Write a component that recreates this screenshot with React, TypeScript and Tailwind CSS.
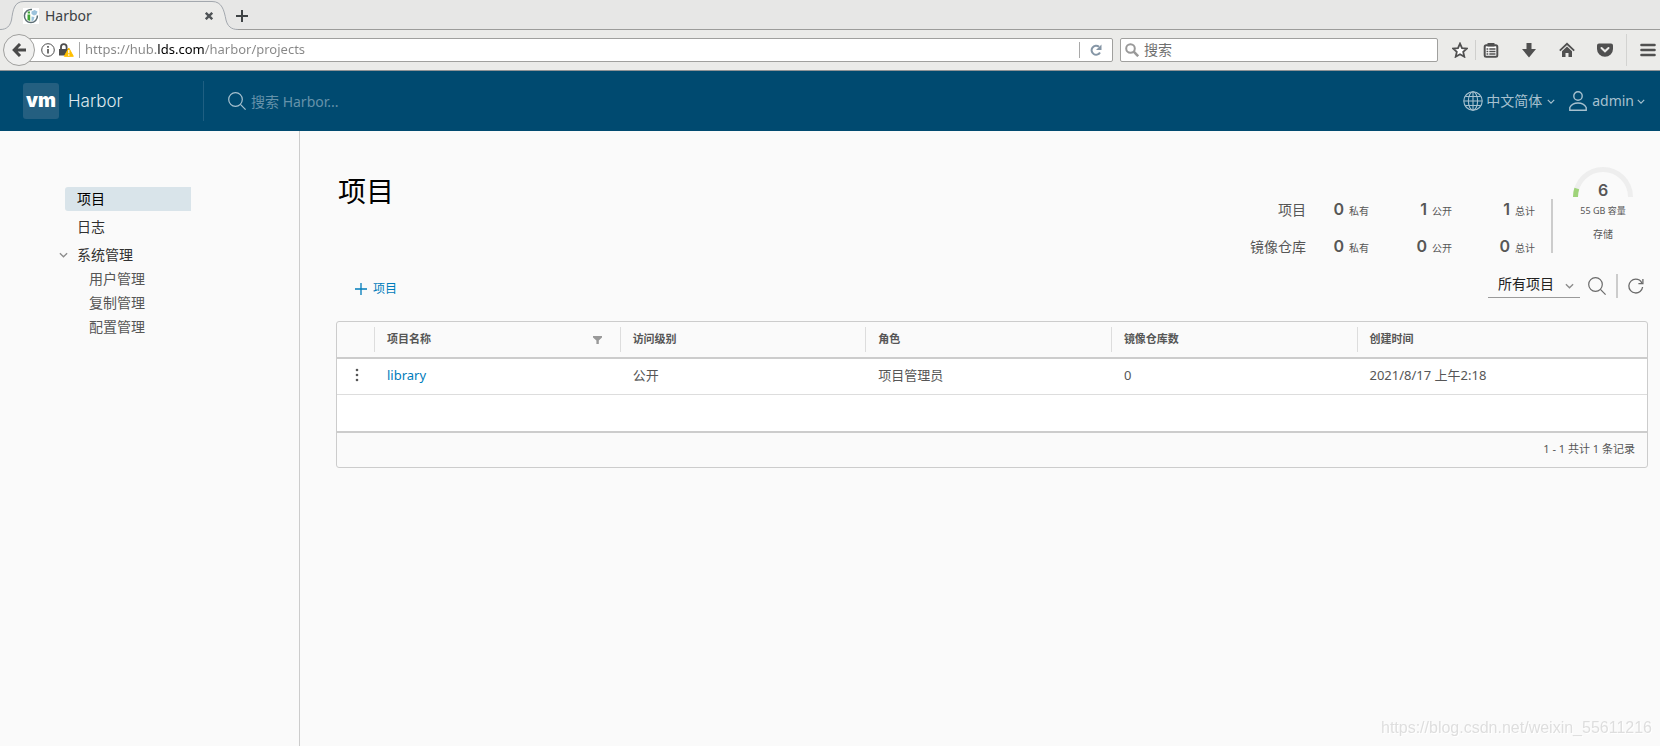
import React, { useState } from 'react';

const UI = "font-['Noto_Sans','Noto_Sans_CJK_SC',sans-serif]";

interface Project {
  name: string;
  access: string;
  role: string;
  repoCount: number;
  createdAt: string;
}

const projects: Project[] = [
  { name: 'library', access: '公开', role: '项目管理员', repoCount: 0, createdAt: '2021/8/17 上午2:18' },
];

const stats = [
  { label: '项目', values: [0, 1, 1] },
  { label: '镜像仓库', values: [0, 0, 0] },
];
const statCaptions = ['私有', '公开', '总计'];

const Chevron = ({ className }: { className: string }) => (
  <svg viewBox="0 0 10 6" className={className} fill="none" stroke="currentColor" strokeWidth="1.5">
    <path d="M1 1l4 4 4-4" />
  </svg>
);

const SearchIcon = ({ className }: { className: string }) => (
  <svg viewBox="0 0 18 18" className={className} fill="none" stroke="currentColor" strokeWidth="1.2">
    <circle cx="7.5" cy="7.5" r="6.8" />
    <path d="M12.4 12.4l5.2 5.2" />
  </svg>
);

const TabBar = () => (
  <div className="relative h-[30px] shrink-0 bg-[#e7e7e6] border-b border-[#9c9c9a] flex items-center">
    <svg className="absolute left-0 top-0 w-[240px] h-[30px]" viewBox="0 0 240 30">
      <path d="M0 29.5C7 29.5 10 26 11.5 20C13 10 14 1.5 24 1.5H212C222 1.5 224 10 226 20C227.5 26 231 29.5 238 29.5V30H0Z" fill="#ebebe9" />
      <path d="M0 29.5C7 29.5 10 26 11.5 20C13 10 14 1.5 24 1.5H212C222 1.5 224 10 226 20C227.5 26 231 29.5 238 29.5" fill="none" stroke="#a3a8ae" />
    </svg>
    <div className="relative flex items-center w-[227px] pt-[2px] pl-[23px] pr-3">
      <svg viewBox="0 0 16 16" className="w-4 h-4">
        <path d="M0 0h16v16H0z" fill="#fff" />
        <path d="M9 1.600A6.500 6.500 0 1014.400 7.500" fill="none" stroke="#5d6f75" strokeWidth="1.500" />
        <path d="M4.500 6.500h2.700V13L4.500 12zM4.700 3.500h2.300v2H4.700z" fill="#3fa535" />
        <path d="M8.500 3.500l3-1.500 3 1.500-1 3-2.500 1-2.500-1.500zM8.500 8.500l3 .500-1 3.500-2 .800z" fill="#9cc3dc" />
      </svg>
      <span className="ml-[6px] text-[14px] leading-5 text-[#3c4144]">Harbor</span>
      <button aria-label="关闭标签页" className="ml-auto text-[#4f5356]">
        <svg viewBox="0 0 8 8" className="w-2 h-2 mr-[2px]" stroke="currentColor" strokeWidth="2.4">
          <path d="M.8.8l6.400 6.400M7.200.8L.8 7.200" />
        </svg>
      </button>
    </div>
    <button aria-label="新标签页" className="relative ml-[9px] pt-[2px] text-[#3f4345]">
      <svg viewBox="0 0 12 12" className="w-3 h-3" stroke="currentColor" strokeWidth="2">
        <path d="M6 0v12M0 6h12" />
      </svg>
    </button>
  </div>
);

const toolbarIcons = [
  {
    label: '书签列表',
    art: (
      <>
        <rect x="1.700" y="3.200" width="12.600" height="11.600" rx="1.500" fill="#fff" stroke="currentColor" strokeWidth="2" />
        <path d="M4.500 1h7v3.500h-7z" />
        <path d="M3.500 7h1.800M6.300 7h6.200M3.500 9.500h1.800M6.300 9.500h6.200M3.500 12h1.800M6.300 12h6.200" stroke="currentColor" strokeWidth="1.400" />
      </>
    ),
  },
  { label: '下载', art: <path d="M5.500 1h5v6H15l-7 8.500L1 7h4.500z" /> },
  {
    label: '主页',
    art: (
      <>
        <path d="M.8 8.700L8 1.800l7.200 6.900" fill="none" stroke="currentColor" strokeWidth="1.8" />
        <path d="M8 4.600l5 4.700V15H9.500v-4h-3v4H3V9.300z" />
      </>
    ),
  },
  {
    label: 'Pocket',
    art: (
      <>
        <path d="M2 1.500h12a2 2 0 012 2V7a8 7.800 0 01-16 0V3.500a2 2 0 012-2z" />
        <path d="M4.500 6L8 9.300 11.500 6" fill="none" stroke="#ebebe9" strokeWidth="2" strokeLinecap="round" />
      </>
    ),
  },
];

const AddressBar = () => {
  const [url, setUrl] = useState('https://hub.lds.com/harbor/projects');

  return (
    <div className="h-[41px] shrink-0 bg-[#ebebe9] border-b border-[#8f9396] flex items-center pl-[3px] pr-1">
      <button aria-label="后退" className="relative z-10 w-8 h-8 rounded-full border border-[#a0a09e] bg-[#f0f0ef] flex items-center justify-center text-[#4a4a4a]">
        <svg viewBox="0 0 14 14" className="w-[14px] h-[14px]" fill="none" stroke="currentColor" strokeWidth="3">
          <path d="M8 1L2.200 7 8 13M2.500 7H14" />
        </svg>
      </button>
      <div className="-ml-2 flex-1 h-6 bg-white border border-[#a0a09e] rounded-r-xs flex items-center pl-[13px]">
        <svg viewBox="0 0 14 14" className="w-[14px] h-[14px]" fill="none" stroke="#4d4d4d">
          <circle cx="7" cy="7" r="6.300" />
          <path d="M7 6v4.500M7 3v1.700" strokeWidth="1.6" />
        </svg>
        <svg viewBox="0 0 15 14" className="ml-1 w-[15px] h-[14px]">
          <path d="M2 6.500V4a2.800 2.800 0 015.600 0v2.500" fill="none" stroke="#4d4d4d" strokeWidth="1.8" />
          <path d="M0 6h9.500v6.500H0z" fill="#4d4d4d" />
          <path d="M9.800 5l4.500 8.300h-9z" fill="#ffbf00" stroke="#ffbf00" strokeLinejoin="round" />
          <path d="M9.800 7v3.300M9.800 11.300v1.400" stroke="#fff" strokeWidth="1.3" />
        </svg>
        <span className="ml-[5px] w-px h-4 bg-[#a9a9a9]" />
        <input
          aria-label="地址"
          value={url}
          onChange={(e) => setUrl(e.target.value)}
          className="ml-[5px] flex-1 text-[13px] text-transparent bg-clip-text bg-[linear-gradient(90deg,#868686_72px,#000_72px,#000_120px,#868686_120px)] outline-none"
        />
        <button aria-label="重新加载" className="w-[33px] h-4 border-l border-[#a9a9a9] flex items-center justify-center text-[#8596a6]">
          <svg viewBox="0 0 12 12" className="w-3 h-3" fill="none" stroke="currentColor" strokeWidth="2">
            <path d="M10 8.500A4.500 4.500 0 119 2.800" />
            <path d="M11.500.5v5.500H6z" fill="currentColor" stroke="none" />
          </svg>
        </button>
      </div>
      <label className="ml-[7px] w-[318px] h-6 bg-white border border-[#a0a09e] rounded-xs flex items-center pl-1">
        <svg viewBox="0 0 14 14" className="w-[14px] h-[14px]" fill="none" stroke="#999" strokeWidth="2">
          <circle cx="5.500" cy="5.500" r="4.300" />
          <path d="M8.700 8.700l4.500 4.500" strokeWidth="2.6" />
        </svg>
        <input placeholder="搜索" aria-label="搜索" className="ml-[5px] pb-[2px] flex-1 min-w-0 text-[14px] placeholder:text-[#6f6f6f] outline-none" />
      </label>
      <div className="flex items-center text-[#505050]">
        <button aria-label="添加书签" className="ml-[14px]">
          <svg viewBox="0 0 16 16" className="w-4 h-4" fill="#fff" stroke="currentColor" strokeWidth="1.8">
            <path d="M8 1.600l2 4.500 4.900.5-3.700 3.300 1.100 4.800L8 12.200l-4.300 2.500 1.100-4.800L1.100 6.600 6 6.100z" />
          </svg>
        </button>
        <span className="ml-[7px] mr-[7px] w-px h-5 bg-[#cfcfcd]" />
        <div className="flex items-center gap-[22px]">
          {toolbarIcons.map((icon) => (
            <button key={icon.label} aria-label={icon.label}>
              <svg viewBox="0 0 16 16" className="w-4 h-4" fill="currentColor">{icon.art}</svg>
            </button>
          ))}
        </div>
        <span className="mx-[13px] w-px h-8 bg-[#d3d3d1]" />
        <button aria-label="菜单">
          <svg viewBox="0 0 16 14" className="w-4 h-[14px]" stroke="currentColor" strokeWidth="2.6" strokeLinecap="round">
            <path d="M1.500 2h13M1.500 7h13M1.500 12h13" />
          </svg>
        </button>
      </div>
    </div>
  );
};

const HarborHeader = () => (
  <header className="h-[60px] shrink-0 bg-[#004a70] flex items-center pl-[23px] pr-[15px] text-[#a7c1cf]">
    <div className="w-9 h-9 rounded-[3px] bg-[#245f80] flex items-center justify-center pb-[2px] font-['Inter',sans-serif] font-black text-[19px] leading-none text-white">vm</div>
    <div className="w-[144px] pl-[9px] font-['Inter',sans-serif] font-light text-[17px] leading-6 text-[#dfe8ed]">Harbor</div>
    <label className="h-10 flex items-center border-l border-[#1f5f82] pl-6">
      <SearchIcon className="w-[18px] h-[18px]" />
      <input placeholder="搜索 Harbor..." aria-label="搜索 Harbor" className="ml-[5px] w-[200px] text-[14px] placeholder:text-[#6592aa] outline-none" />
    </label>
    <button className="ml-auto flex items-center text-[14px]">
      <svg viewBox="0 0 20 20" className="w-5 h-5 mr-[3px]" fill="none" stroke="currentColor" strokeWidth="1.1">
        <circle cx="10" cy="10" r="9.200" />
        <ellipse cx="10" cy="10" rx="4.600" ry="9.200" />
        <path d="M10 .8v18.400M.8 10h18.400M2.500 5.500h15M2.500 14.500h15" />
      </svg>
      <span className="pb-[2px]">中文简体</span>
      <Chevron className="ml-[5px] w-2 h-[5px]" />
    </button>
    <button className="ml-[14px] flex items-center text-[14px]">
      <svg viewBox="0 0 18 20" className="w-[18px] h-5 mr-[5px]" fill="none" stroke="currentColor" strokeWidth="1.4">
        <circle cx="9" cy="5" r="4.200" />
        <path d="M.8 19.200v-2.700c1.500-2.800 4.700-4.500 8.200-4.500s6.700 1.700 8.200 4.500v2.700z" />
      </svg>
      <span className="pb-[2px]">admin</span>
      <Chevron className="ml-[3px] w-2 h-[5px]" />
    </button>
  </header>
);

const SideNav = () => (
  <nav className="w-[300px] shrink-0 border-r border-[#ccc] pt-14 pl-[65px] text-[14px] leading-6 text-[#313131]">
    <a href="#projects" className="block w-[126px] pl-3 rounded-l-[3px] bg-[#d9e4ea] text-black">项目</a>
    <a href="#logs" className="block mt-1 pl-3">日志</a>
    <button className="mt-1 -ml-[6px] flex items-center">
      <Chevron className="w-[9px] h-[6px] mr-[9px] text-[#8c8c8c]" />
      系统管理
    </button>
    <div className="pl-6 text-[#565656]">
      <a href="#users" className="block">用户管理</a>
      <a href="#replication" className="block">复制管理</a>
      <a href="#config" className="block">配置管理</a>
    </div>
  </nav>
);

const Statistics = () => (
  <div className="flex items-start pt-9 pb-[2px] text-[#565656]">
    <div className="mt-6 flex flex-col items-end">
      {stats.map((row) => (
        <div key={row.label} className="h-[37px] flex items-center">
          <span className="text-[14px]">{row.label}</span>
          {row.values.map((value, i) => (
            <span key={i} className={`flex items-baseline justify-end gap-[5px] pb-[2px] ${i === 0 ? 'w-[63px]' : 'w-[83px]'}`}>
              <b className="font-['Inter',sans-serif] font-semibold text-[16px] leading-6">{value}</b>
              <span className="text-[10px]">{statCaptions[i]}</span>
            </span>
          ))}
        </div>
      ))}
    </div>
    <span className="ml-4 mt-8 w-[2px] h-[54px] bg-[#ccc]" />
    <div className="relative ml-5 mr-[15px] w-[60px] text-center">
      <svg viewBox="0 0 60 30" className="w-[60px] h-[30px]" fill="none" strokeWidth="5">
        <path d="M2.500 30a27.500 27.500 0 0155 0" stroke="#eee" />
        <path d="M2.500 30a27.500 27.500 0 011.300-8.500" stroke="#9fd37a" />
      </svg>
      <b className="absolute inset-x-0 top-[11px] font-['Inter',sans-serif] font-semibold text-[16px] leading-6">6</b>
      <p className="mt-[6px] text-[9px] leading-4 whitespace-nowrap">55 GB 容量</p>
      <p className="mt-[7px] text-[10px] leading-4">存储</p>
    </div>
  </div>
);

const Toolbar = () => (
  <div className="h-10 flex items-center pl-[19px] pr-1">
    <button className="flex items-center pt-1 text-[12px] text-[#007cbb]">
      <svg viewBox="0 0 12 12" className="w-3 h-3 mr-[6px]" stroke="currentColor" strokeWidth="1.3">
        <path d="M6 0v12M0 6h12" />
      </svg>
      项目
    </button>
    <div className="ml-auto pb-[2px] flex items-center">
      <div className="relative flex items-center text-[#8c8c8c]">
        <select aria-label="项目筛选" className="appearance-none w-[92px] h-6 pl-[10px] pb-1 text-[14px] leading-5 text-[#222] border-b border-[#9a9a9a] outline-none">
          <option>所有项目</option>
          <option>私有项目</option>
          <option>公开项目</option>
        </select>
        <Chevron className="absolute right-[6px] w-[9px] h-[6px] pointer-events-none" />
      </div>
      <button aria-label="搜索项目" className="ml-2 text-[#6a6a6a]">
        <SearchIcon className="w-[18px] h-[18px]" />
      </button>
      <span className="ml-[10px] w-[2px] h-6 bg-[#ccc]" />
      <button aria-label="刷新" className="ml-[10px] text-[#6a6a6a]">
        <svg viewBox="0 0 16 16" className="w-4 h-4" fill="none" stroke="currentColor" strokeWidth="1.3">
          <path d="M14.600 9A6.900 6.900 0 117.700 1.200c2.600 0 4.900 1.300 6.200 3.800" />
          <path d="M14.900 1v4.700h-4.500" />
        </svg>
      </button>
    </div>
  </div>
);

const HeadCell = ({ children }: { children: React.ReactNode }) => (
  <div className="h-[25px] border-l border-[#ddd] pl-3 pr-4 flex items-center justify-between">{children}</div>
);

const ProjectTable = () => (
  <div className="mt-[14px] border border-[#ccc] rounded-[3px] overflow-hidden text-[#565656]">
    <table className="w-full table-fixed text-left">
      <thead>
        <tr className="h-9 border-b-2 border-[#ccc] text-[11px]">
          <th className="w-[37px]" aria-label="操作" />
          <th className="w-[18.75%]">
            <HeadCell>
              项目名称
              <button aria-label="筛选" className="mr-[2px] text-[#999]">
                <svg viewBox="0 0 9 8" className="w-[9px] h-2" fill="currentColor">
                  <path d="M0 0h9v1.500L5.800 4.500V8H3.400V4.500L0 1.500z" />
                </svg>
              </button>
            </HeadCell>
          </th>
          <th className="w-[18.75%]"><HeadCell>访问级别</HeadCell></th>
          <th className="w-[18.75%]"><HeadCell>角色</HeadCell></th>
          <th className="w-[18.75%]"><HeadCell>镜像仓库数</HeadCell></th>
          <th><HeadCell>创建时间</HeadCell></th>
        </tr>
      </thead>
      <tbody className="bg-white text-[13px]">
        {projects.map((p) => (
          <tr key={p.name} className="h-9 border-b border-[#ddd] *:pb-[2px]">
            <td>
              <button aria-label="更多操作" className="flex ml-[18px]">
                <svg viewBox="0 0 4 14" className="w-1 h-[14px]" fill="#565656">
                  <circle cx="2" cy="2" r="1.300" />
                  <circle cx="2" cy="7" r="1.300" />
                  <circle cx="2" cy="12" r="1.300" />
                </svg>
              </button>
            </td>
            <td className="pl-[13px]"><a href="#library" className="text-[#007cbb]">{p.name}</a></td>
            <td className="pl-[13px]">{p.access}</td>
            <td className="pl-[13px]">{p.role}</td>
            <td className="pl-[13px]">{p.repoCount}</td>
            <td className="pl-[13px]">{p.createdAt}</td>
          </tr>
        ))}
        <tr className="h-[37px]"><td colSpan={6} /></tr>
      </tbody>
    </table>
    <div className="h-9 border-t-2 border-[#ccc] pr-3 pb-[2px] flex items-center justify-end text-[11px]">1 - 1 共计 1 条记录</div>
  </div>
);

const App: React.FC = () => (
  <div className={`min-h-screen flex flex-col bg-[#fafafa] ${UI}`}>
    <TabBar />
    <AddressBar />
    <HarborHeader />
    <div className="flex-1 flex">
      <SideNav />
      <main className="flex-1 pl-9 pr-3">
        <div className="flex items-start justify-between">
          <h1 className="mt-10 ml-[2px] text-[28px] leading-10 text-black">项目</h1>
          <Statistics />
        </div>
        <Toolbar />
        <ProjectTable />
      </main>
    </div>
    <p className="fixed right-2 bottom-[6px] font-['Liberation_Sans',sans-serif] text-[16px] text-[#dedede] [text-shadow:1px_1px_0_#fff] pointer-events-none">
      https://blog.csdn.net/weixin_55611216
    </p>
  </div>
);

export default App;
